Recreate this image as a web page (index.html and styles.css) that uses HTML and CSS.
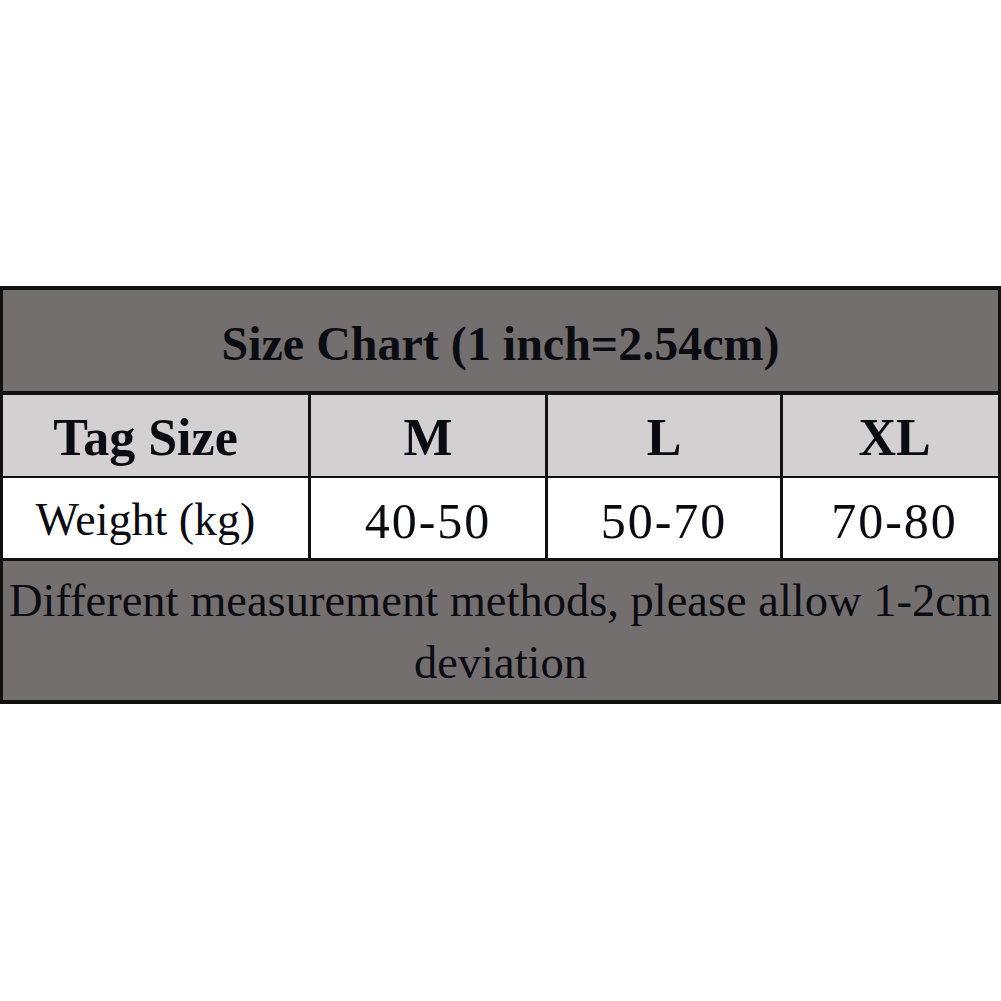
FILE: index.html
```html
<!DOCTYPE html>
<html lang="en">

<head>
    <meta charset="UTF-8" />
    <title>Size Chart</title>
    <meta name="viewport" content="width=device-width, initial-scale=1" />
    <link rel="stylesheet" href="styles.css">
</head>

<body>
    <div class="chart">
        <div class="cell title">Size Chart (1 inch=2.54cm)</div>

        <div class="cell head first">Tag Size</div>
        <div class="cell head">M</div>
        <div class="cell head">L</div>
        <div class="cell head last">XL</div>

        <div class="cell data first">Weight (kg)</div>
        <div class="cell data num">40-50</div>
        <div class="cell data num">50-70</div>
        <div class="cell data num last">70-80</div>

        <div class="cell note">Different measurement methods, please allow 1-2cm deviation</div>
    </div>
</body>

</html>
```

FILE: styles.css
```css
body {
    margin: 0;
    background: #fff;
    font-family: "Liberation Serif", "Times New Roman", serif;
    color: #0b0b12;
}

.chart {
    width: 1001px;
    box-sizing: border-box;
    margin-top: 286px;
    border: 4px solid #111;
    border-left-width: 3px;
    border-right-width: 3px;
    display: grid;
    grid-template-columns: 305px 237px 235px 1fr;
}

.cell {
    box-sizing: border-box;
    display: flex;
    align-items: center;
    justify-content: center;
    text-align: center;
    border-left: 3px solid #111;
}

.cell.first,
.title,
.note {
    border-left: none;
}

.cell.first {
    padding-right: 20px;
}

.cell.last {
    padding-left: 8px;
}

.title {
    grid-column: 1 / -1;
    height: 105px;
    padding-top: 5px;
    background: #736f6e;
    border-bottom: 4px solid #111;
    font-size: 48px;
    font-weight: bold;
}

.head {
    height: 83px;
    padding-top: 3px;
    background: #d2d0d1;
    border-bottom: 2px solid #111;
    font-size: 52px;
    font-weight: bold;
}

.data {
    height: 83px;
    padding-top: 2px;
    background: #fff;
    border-bottom: 3px solid #111;
    font-size: 46px;
}

.data.num {
    font-size: 50px;
    letter-spacing: 2px;
    padding-top: 6px;
}

.note {
    grid-column: 1 / -1;
    height: 139px;
    padding-top: 2px;
    background: #736f6e;
    font-size: 46.5px;
    line-height: 62px;
}
```
